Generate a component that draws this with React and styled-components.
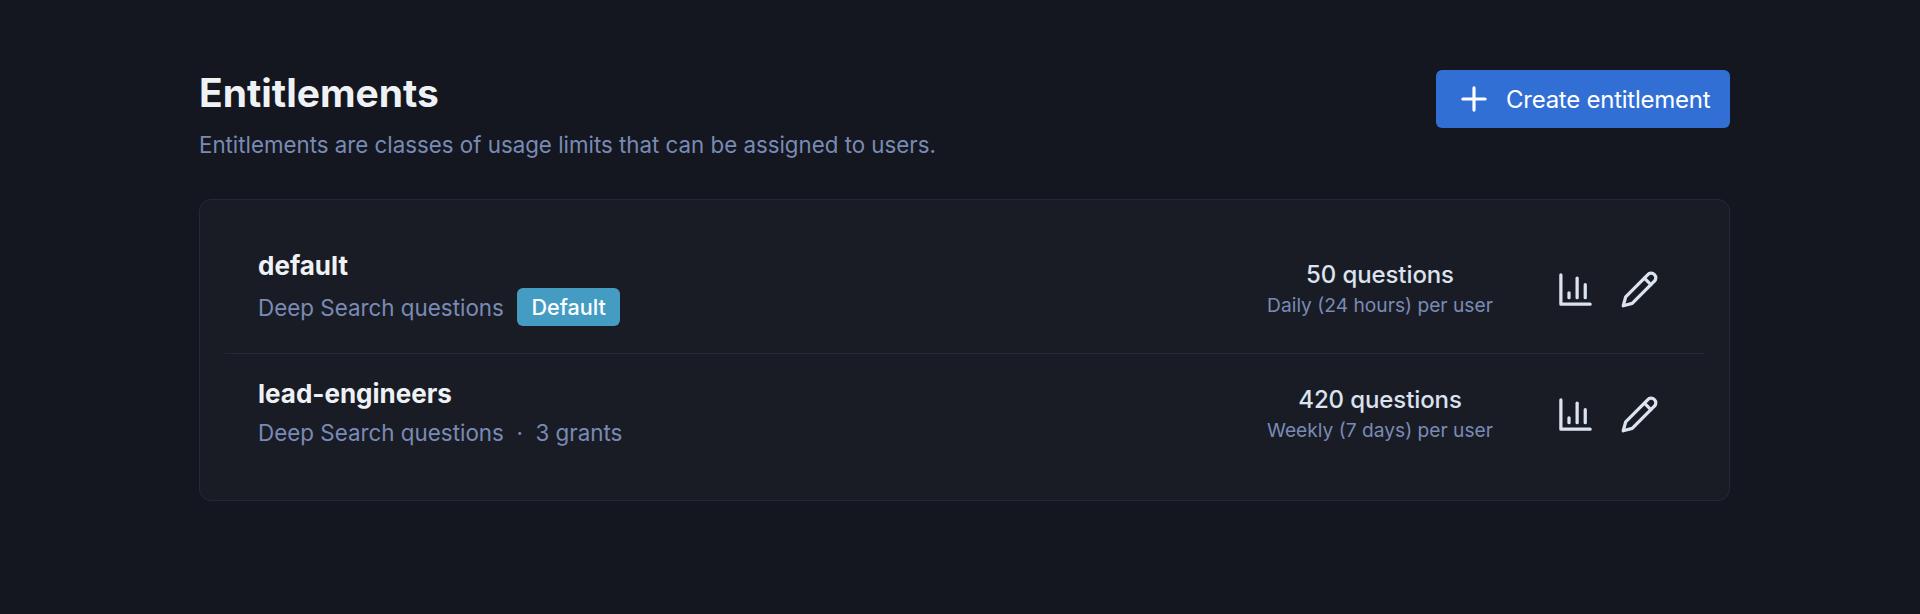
import React from 'react';
import styled, {createGlobalStyle} from 'styled-components';

const theme = {
  page: '#14171f',
  card: '#1a1c25',
  border: '#262838',
  heading: '#eff2f5',
  body: '#dbe2f0',
  muted: '#798bb5',
  primary: '#326fd5',
  info: '#459cc3',
  white: '#ffffff',
};

const entitlements = [
  {id: 1, name: 'default', type: 'Deep Search questions', isDefault: true, limit: '50 questions', window: 'Daily (24 hours) per user'},
  {id: 2, name: 'lead-engineers', type: 'Deep Search questions', grants: '3 grants', limit: '420 questions', window: 'Weekly (7 days) per user'},
];

const PlusIcon = () => (
  <StyledIcon $size={38} viewBox="0 0 24 24">
    <path d="M5 12h14"/>
    <path d="M12 5v14"/>
  </StyledIcon>
);

const ChartIcon = () => (
  <StyledIcon $size={39} viewBox="0 0 24 24">
    <path d="M3 3v18h18"/>
    <path d="M18 17V9"/>
    <path d="M13 17V5"/>
    <path d="M8 17v-3"/>
  </StyledIcon>
);

const PencilIcon = () => (
  <StyledIcon $size={39} viewBox="0 0 24 24">
    <path d="M17 3a2.85 2.83 0 1 1 4 4L7.5 20.5 2 22l1.5-5.5Z"/>
    <path d="m15 5 4 4"/>
  </StyledIcon>
);

const EntitlementRow = ({item}) => (
  <StyledRow>
    <StyledInfo>
      <StyledName>{item.name}</StyledName>
      <StyledMeta $tall={item.isDefault}>
        <span>{item.type}</span>
        {item.isDefault && <StyledBadge>Default</StyledBadge>}
        {item.grants && <StyledDot>·</StyledDot>}
        {item.grants && <span>{item.grants}</span>}
      </StyledMeta>
    </StyledInfo>
    <StyledSide>
      <StyledLimit>
        <StyledAmount>{item.limit}</StyledAmount>
        <StyledWindow>{item.window}</StyledWindow>
      </StyledLimit>
      <StyledActions>
        <StyledIconButton aria-label="Usage"><ChartIcon/></StyledIconButton>
        <StyledIconButton aria-label="Edit"><PencilIcon/></StyledIconButton>
      </StyledActions>
    </StyledSide>
  </StyledRow>
);

export default function App() {
  return (
    <StyledPage>
      <GlobalStyle/>
      <StyledHeader>
        <div>
          <StyledTitle>Entitlements</StyledTitle>
          <StyledSubtitle>Entitlements are classes of usage limits that can be assigned to users.</StyledSubtitle>
        </div>
        <StyledCreate><PlusIcon/>Create entitlement</StyledCreate>
      </StyledHeader>
      <StyledCard>
        {entitlements.map((item) => <EntitlementRow key={item.id} item={item}/>)}
      </StyledCard>
    </StyledPage>
  );
}

const GlobalStyle = createGlobalStyle`
  * {
    box-sizing: border-box;
  }

  body {
    margin: 0;
    background: ${theme.page};
    font-family: Inter, "Liberation Sans", sans-serif;
  }

  button {
    padding: 0;
    border: 0;
    background: none;
    font: inherit;
    color: inherit;
    cursor: pointer;
  }
`;

const StyledPage = styled.main`
  min-height: 614px;
  padding: 70px 190px 0 199px;
`;

const StyledHeader = styled.header`
  display: flex;
  justify-content: space-between;
  align-items: flex-start;
  height: 129px;
`;

const StyledTitle = styled.h1`
  margin: 0;
  font-size: 39px;
  font-weight: 700;
  line-height: 45px;
  color: ${theme.heading};
`;

const StyledSubtitle = styled.p`
  margin: 13px 0 0;
  font-size: 22.3px;
  line-height: 34px;
  color: ${theme.muted};
`;

const StyledCreate = styled.button`
  display: flex;
  align-items: center;
  gap: 13px;
  width: 294px;
  height: 58px;
  padding-left: 19px;
  border-radius: 6px;
  background: ${theme.primary};
  font-size: 24px;
  font-weight: 430;
  letter-spacing: -0.25px;
  white-space: nowrap;
  color: ${theme.white};
`;

const StyledCard = styled.section`
  height: 302px;
  padding: 25px;
  border: 1px solid ${theme.border};
  border-radius: 12px;
  background: ${theme.card};
`;

const StyledRow = styled.article`
  display: flex;
  justify-content: space-between;
  align-items: center;
  height: 128px;
  padding: 0 45px 0 33px;

  & + & {
    height: 121px;
    border-top: 1px solid ${theme.border};
  }
`;

const StyledInfo = styled.div`
  padding-bottom: 3px;
`;

const StyledName = styled.h2`
  margin: 0;
  font-size: 26px;
  font-weight: 650;
  line-height: 39px;
  color: ${theme.heading};
`;

const StyledMeta = styled.div`
  display: flex;
  align-items: center;
  height: ${({$tall}) => $tall ? 44 : 38}px;
  font-size: 22.4px;
  color: ${theme.muted};
`;

const StyledBadge = styled.span`
  margin-left: 13px;
  padding: 0 14.5px;
  border-radius: 6px;
  background: ${theme.info};
  font-size: 21.6px;
  font-weight: 550;
  line-height: 38px;
  color: ${theme.white};
`;

const StyledDot = styled.span`
  margin: 0 12.5px;
`;

const StyledSide = styled.div`
  display: flex;
  align-items: center;
`;

const StyledLimit = styled.div`
  width: 226px;
  margin: 0 63px 2px 0;
  text-align: center;
  white-space: nowrap;
`;

const StyledAmount = styled.div`
  font-size: 24px;
  font-weight: 550;
  line-height: 33px;
  letter-spacing: -0.1px;
  color: ${theme.body};
`;

const StyledWindow = styled.div`
  font-size: 19.2px;
  line-height: 28px;
  color: ${theme.muted};
`;

const StyledActions = styled.div`
  display: flex;
  gap: 25px;
`;

const StyledIconButton = styled.button`
  display: flex;
  color: ${theme.body};
`;

const StyledIcon = styled.svg`
  flex: none;
  width: ${({$size}) => $size}px;
  height: ${({$size}) => $size}px;
  fill: none;
  stroke: currentColor;
  stroke-width: 2;
  stroke-linecap: round;
  stroke-linejoin: round;
`;
